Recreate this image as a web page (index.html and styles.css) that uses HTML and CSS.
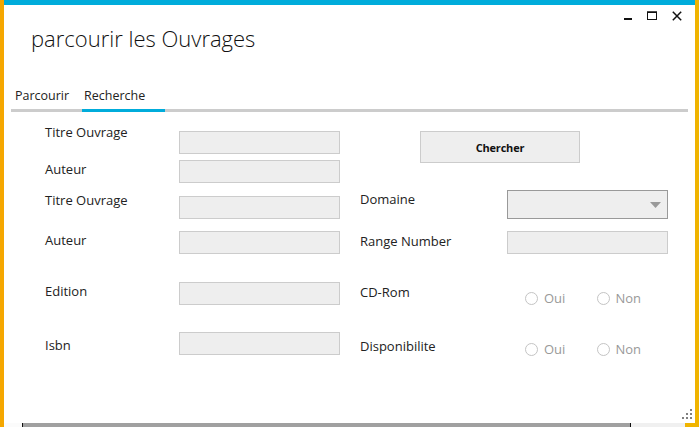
FILE: index.html
```html
<!DOCTYPE html>
<html lang="fr">
<head>
<meta charset="utf-8">
<title>parcourir les Ouvrages</title>
<link rel="stylesheet" href="styles.css">
</head>
<body>
<div class="screen">
  <div class="window">
    <div class="titlebar">
      <h1 class="title">parcourir les Ouvrages</h1>
      <div class="controls">
        <svg class="ctl" width="10" height="10" viewBox="0 0 10 10"><rect x="2" y="7" width="8" height="2" fill="#111"/></svg>
        <svg class="ctl" width="10" height="10" viewBox="0 0 10 10"><rect x="0.5" y="1" width="9" height="7.5" fill="none" stroke="#111" stroke-width="1"/><rect x="0" y="0.5" width="10" height="1.5" fill="#111"/></svg>
        <svg class="ctl" width="10" height="10" viewBox="0 0 10 10"><path d="M0.8 0.8 L9.2 9.2 M9.2 0.8 L0.8 9.2" stroke="#111" stroke-width="1.5" fill="none"/></svg>
      </div>
    </div>
    <div class="tabs">
      <div class="tab tab-first">Parcourir</div>
      <div class="tab tab-second active">Recherche</div>
    </div>
    <div class="form">
      <div class="col col-left">
        <div class="row mt-19"><span class="lbl off-n7">Titre Ouvrage</span><span class="field"></span></div>
        <div class="row mt-6"><span class="lbl off-1">Auteur</span><span class="field"></span></div>
        <div class="row mt-13"><span class="lbl off-n4">Titre Ouvrage</span><span class="field"></span></div>
        <div class="row mt-12"><span class="lbl off-1">Auteur</span><span class="field"></span></div>
        <div class="row mt-28"><span class="lbl off-1">Edition</span><span class="field"></span></div>
        <div class="row mt-27"><span class="lbl off-5">Isbn</span><span class="field"></span></div>
      </div>
      <div class="col col-right">
        <button class="btn mt-19">Chercher</button>
        <div class="row row-r mt-27"><span class="lbl off-1">Domaine</span>
          <span class="combo"><svg class="arrow" width="11" height="6" viewBox="0 0 11 6"><path d="M0 0 H11 L5.5 6 Z" fill="#999"/></svg></span>
        </div>
        <div class="row row-r mt-12"><span class="lbl off-2">Range Number</span><span class="field"></span></div>
        <div class="row row-r mt-30"><span class="lbl">CD-Rom</span>
          <div class="radios rmt-8">
            <label class="radio"><span class="dot"></span>Oui</label>
            <label class="radio"><span class="dot"></span>Non</label>
          </div>
        </div>
        <div class="row row-r mt-33"><span class="lbl">Disponibilite</span>
          <div class="radios rmt-5">
            <label class="radio"><span class="dot"></span>Oui</label>
            <label class="radio"><span class="dot"></span>Non</label>
          </div>
        </div>
      </div>
    </div>
    <svg class="grip" width="10" height="10" viewBox="0 0 10 10">
      <rect x="8" y="0" width="2" height="2" fill="#808080"/>
      <rect x="4" y="4" width="2" height="2" fill="#808080"/>
      <rect x="8" y="4" width="2" height="2" fill="#808080"/>
      <rect x="0" y="8" width="2" height="2" fill="#808080"/>
      <rect x="4" y="8" width="2" height="2" fill="#808080"/>
      <rect x="8" y="8" width="2" height="2" fill="#808080"/>
    </svg>
  </div>
  <div class="taskbar">
    <span class="seg seg-white"></span>
    <span class="seg seg-gray"></span>
    <span class="seg seg-light"></span>
  </div>
</div>
</body>
</html>
```
FILE: styles.css
```css
* { box-sizing: border-box; }
html, body { margin: 0; padding: 0; }
body {
  width: 699px;
  height: 427px;
  overflow: hidden;
  background: linear-gradient(90deg, #f5a700 0, #f5a700 4px, #f0b400 4px);
  font-family: "Open Sans", "Noto Sans", sans-serif;
  color: #222;
}
.screen { display: flex; flex-direction: column; width: 699px; height: 427px; }
.window {
  position: relative;
  margin-left: 4px;
  width: 691px;
  height: 423px;
  background: #fff;
  border-top: 5px solid #00acdb;
}
.titlebar { display: flex; align-items: flex-start; }
.title {
  margin: 18px 0 0 27px;
  font-size: 22px;
  font-weight: 300;
  line-height: 30px;
  color: #111;
}
.controls {
  margin-left: auto;
  margin-top: 6px;
  margin-right: 13px;
  display: flex;
  gap: 15px;
}
.ctl { display: block; }
.tabs {
  margin: 34px 7px 0 7px;
  display: flex;
  border-bottom: 3px solid #cccccc;
}
.tab {
  font-size: 12.5px;
  line-height: 18px;
  padding-bottom: 4px;
  color: #222;
  white-space: nowrap;
}
.tab-first { width: 71px; padding-left: 4px; }
.tab-second { width: 83px; padding-left: 2px; }
.tab.active { border-bottom: 3px solid #00acdb; margin-bottom: -3px; }
.form { display: flex; padding-left: 41px; gap: 20px; }
.col { display: flex; flex-direction: column; }
.col-left { width: 295px; }
.row { display: grid; grid-template-columns: 134px 161px; align-items: start; }
.row-r { grid-template-columns: 147px 161px; }
.lbl { font-size: 13px; line-height: 16px; white-space: nowrap; color: #222; }
.field {
  display: block;
  height: 23px;
  background: #eeeeee;
  border: 1px solid #cccccc;
}
.combo {
  display: flex;
  align-items: center;
  justify-content: flex-end;
  height: 29px;
  background: #eeeeee;
  border: 1px solid #999999;
  padding-right: 6px;
}
.arrow { display: block; }
.btn {
  margin-left: 60px;
  width: 160px;
  height: 32px;
  background: #eeeeee;
  border: 1px solid #cccccc;
  font-family: "Open Sans", "Noto Sans", sans-serif;
  font-size: 11px;
  letter-spacing: -0.2px;
  font-weight: 700;
  color: #111;
  padding: 0;
}
.radios { display: flex; padding-left: 18px; }
.radio {
  width: 72px;
  display: flex;
  align-items: center;
  gap: 6px;
  font-size: 13px;
  line-height: 13px;
  color: #999;
}
.dot {
  width: 13px;
  height: 13px;
  border: 1px solid #c4c4c4;
  border-radius: 50%;
  background: #fff;
}
.grip { position: absolute; right: 3px; bottom: 4px; }
.taskbar { display: flex; height: 4px; }
.seg { display: block; height: 4px; }
.seg-white { margin-left: 4px; width: 19px; background: #fbfbfb; border-right: 1px solid #111; }
.seg-gray { width: 608px; background: #a0a0a0; border-right: 1px solid #111; }
.seg-light { width: 54px; background: #f0f0f0; }
.mt-6 { margin-top: 6px; }
.mt-12 { margin-top: 12px; }
.mt-13 { margin-top: 13px; }
.mt-19 { margin-top: 19px; }
.mt-27 { margin-top: 27px; }
.mt-28 { margin-top: 28px; }
.mt-30 { margin-top: 30px; }
.mt-33 { margin-top: 33px; }
.rmt-8 { margin-top: 8px; }
.rmt-5 { margin-top: 5px; }
.off-n7 { margin-top: -7px; }
.off-n4 { margin-top: -4px; }
.off-1 { margin-top: 1px; }
.off-2 { margin-top: 2px; }
.off-5 { margin-top: 5px; }
```
